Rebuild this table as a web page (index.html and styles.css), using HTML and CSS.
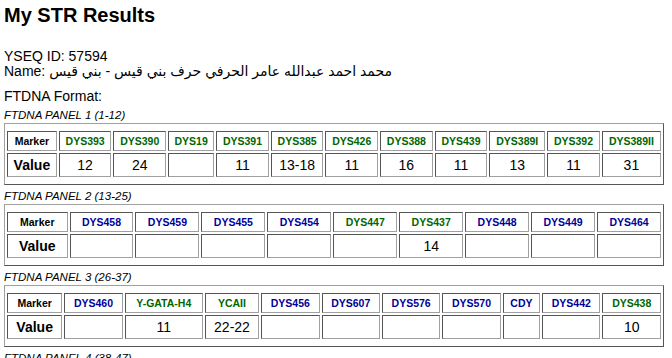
FILE: index.html
```html
<!DOCTYPE html>
<html>
<head>
<meta charset="utf-8">
<title>My STR Results</title>
<link rel="stylesheet" href="styles.css">
</head>
<body>
<h1 class="title">My STR Results</h1>
<div class="info">
  <div>YSEQ ID: 57594</div>
  <div>Name: محمد احمد عبدالله عامر الحرفي حرف بني قيس - بني قيس</div>
</div>
<div class="format">FTDNA Format:</div>

<div class="panel-label">FTDNA PANEL 1 (1-12)</div>
<table class="str">
  <tr>
    <th class="lbl">Marker</th>
    <th class="g">DYS393</th><th class="g">DYS390</th><th class="g">DYS19</th><th class="g">DYS391</th><th class="g">DYS385</th><th class="g">DYS426</th><th class="g">DYS388</th><th class="g">DYS439</th><th class="g">DYS389I</th><th class="g">DYS392</th><th class="g">DYS389II</th>
  </tr>
  <tr>
    <td class="val">Value</td>
    <td>12</td><td>24</td><td></td><td>11</td><td>13-18</td><td>11</td><td>16</td><td>11</td><td>13</td><td>11</td><td>31</td>
  </tr>
</table>

<div class="panel-label">FTDNA PANEL 2 (13-25)</div>
<table class="str">
  <tr>
    <th class="lbl">Marker</th>
    <th class="b">DYS458</th><th class="b">DYS459</th><th class="b">DYS455</th><th class="b">DYS454</th><th class="g">DYS447</th><th class="g">DYS437</th><th class="b">DYS448</th><th class="b">DYS449</th><th class="b">DYS464</th>
  </tr>
  <tr>
    <td class="val">Value</td>
    <td></td><td></td><td></td><td></td><td></td><td>14</td><td></td><td></td><td></td>
  </tr>
</table>

<div class="panel-label">FTDNA PANEL 3 (26-37)</div>
<table class="str">
  <tr>
    <th class="lbl">Marker</th>
    <th class="b">DYS460</th><th class="g">Y-GATA-H4</th><th class="g">YCAII</th><th class="b">DYS456</th><th class="b">DYS607</th><th class="b">DYS576</th><th class="b">DYS570</th><th class="b">CDY</th><th class="b">DYS442</th><th class="g">DYS438</th>
  </tr>
  <tr>
    <td class="val">Value</td>
    <td></td><td>11</td><td>22-22</td><td></td><td></td><td></td><td></td><td></td><td></td><td>10</td>
  </tr>
</table>

<div class="panel-label">FTDNA PANEL 4 (38-47)</div>
<table class="str">
  <tr>
    <th class="lbl">Marker</th>
    <th class="b">DYS531</th><th class="b">DYS578</th><th class="b">DYF395S1</th><th class="b">DYS590</th><th class="b">DYS537</th><th class="b">DYS641</th><th class="b">DYS472</th><th class="b">DYF406S1</th><th class="b">DYS511</th>
  </tr>
  <tr>
    <td class="val">Value</td>
    <td></td><td></td><td></td><td></td><td></td><td></td><td></td><td></td><td></td>
  </tr>
</table>
</body>
</html>
```
FILE: styles.css
```css
body {
  margin: 4px 8px 4px 4px;
  font-family: "Liberation Sans", Arial, "DejaVu Sans", sans-serif;
  font-size: 14px;
  color: #000;
  background: #fff;
}

.title {
  font-size: 20px;
  font-weight: bold;
  line-height: 23px;
  margin: 0 0 22px 0;
}

.info {
  line-height: 15px;
}

.format {
  line-height: 15px;
  margin-top: 10px;
}

.panel-label {
  font-style: italic;
  font-size: 11.5px;
  line-height: 14px;
  margin-top: 4px;
  margin-bottom: 1px;
}

.str {
  width: 100%;
  border: 1px solid;
  border-color: #a0a0a0 #555555 #555555 #a0a0a0;
  border-spacing: 2px;
  padding: 5px 0;
}

.str th,
.str td {
  border: 1px solid;
  border-color: #555555 #a0a0a0 #a0a0a0 #555555;
  padding: 3px;
  text-align: center;
}

.str th {
  font-size: 10.5px;
  font-weight: bold;
  line-height: 12px;
}

.str td {
  font-size: 14px;
  line-height: 16px;
}

.str th.lbl { color: #000; }
.str th.g { color: #006600; }
.str th.b { color: #000099; }
.str td.val { font-weight: bold; }
```
